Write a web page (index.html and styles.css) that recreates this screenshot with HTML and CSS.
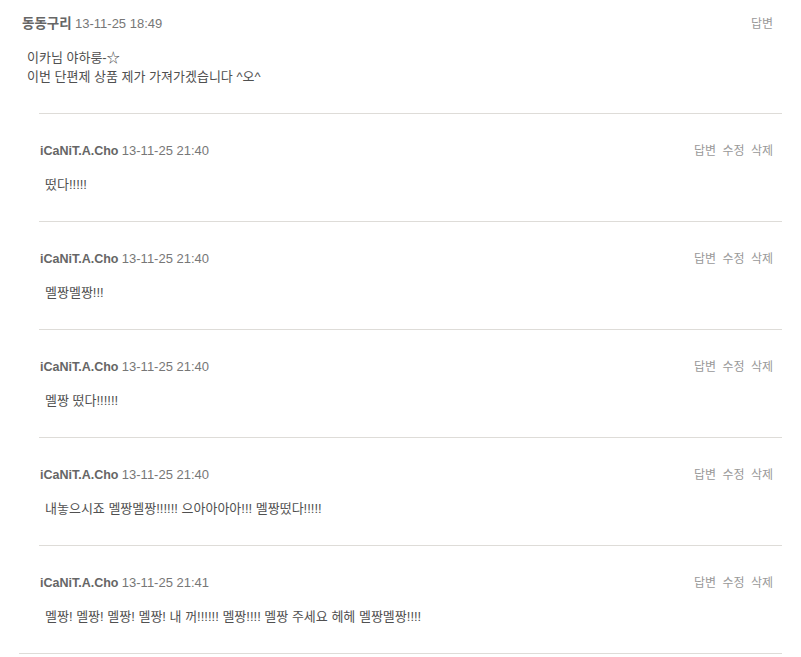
FILE: index.html
```html
<!DOCTYPE html>
<html lang="ko">
<head>
    <meta charset="UTF-8">
    <meta name="viewport" content="width=device-width, initial-scale=1.0">
    <title>댓글</title>
    <link rel="stylesheet" href="styles.css">
</head>
<body>
    <div class="thread">
        <div class="comment">
            <div class="comment-head">
                <div class="who"><span class="name">동동구리</span> <span class="date">13-11-25 18:49</span></div>
                <div class="actions"><a href="#">답변</a></div>
            </div>
            <div class="comment-body">
                이카님 야하룽-☆<br>
                이번 단편제 상품 제가 가져가겠습니다 ^오^
            </div>
        </div>

        <div class="replies">
            <div class="reply">
                <div class="comment-head">
                    <div class="who"><span class="name">iCaNiT.A.Cho</span> <span class="date">13-11-25 21:40</span></div>
                    <div class="actions"><a href="#">답변</a> <a href="#">수정</a> <a href="#">삭제</a></div>
                </div>
                <div class="comment-body">떴다!!!!!</div>
            </div>
            <div class="reply">
                <div class="comment-head">
                    <div class="who"><span class="name">iCaNiT.A.Cho</span> <span class="date">13-11-25 21:40</span></div>
                    <div class="actions"><a href="#">답변</a> <a href="#">수정</a> <a href="#">삭제</a></div>
                </div>
                <div class="comment-body">멜짱멜짱!!!</div>
            </div>
            <div class="reply">
                <div class="comment-head">
                    <div class="who"><span class="name">iCaNiT.A.Cho</span> <span class="date">13-11-25 21:40</span></div>
                    <div class="actions"><a href="#">답변</a> <a href="#">수정</a> <a href="#">삭제</a></div>
                </div>
                <div class="comment-body">멜짱 떴다!!!!!!</div>
            </div>
            <div class="reply">
                <div class="comment-head">
                    <div class="who"><span class="name">iCaNiT.A.Cho</span> <span class="date">13-11-25 21:40</span></div>
                    <div class="actions"><a href="#">답변</a> <a href="#">수정</a> <a href="#">삭제</a></div>
                </div>
                <div class="comment-body">내놓으시죠 멜짱멜짱!!!!!! 으아아아아!!! 멜짱떴다!!!!!</div>
            </div>
            <div class="reply">
                <div class="comment-head">
                    <div class="who"><span class="name">iCaNiT.A.Cho</span> <span class="date">13-11-25 21:41</span></div>
                    <div class="actions"><a href="#">답변</a> <a href="#">수정</a> <a href="#">삭제</a></div>
                </div>
                <div class="comment-body">멜짱! 멜짱! 멜짱! 멜짱! 내 꺼!!!!!! 멜짱!!!! 멜짱 주세요 헤헤 멜짱멜짱!!!!</div>
            </div>
        </div>
    </div>
</body>
</html>
```

FILE: styles.css
```css
body {
    margin: 0;
    background: #fff;
    font-family: "Liberation Sans", "Noto Sans CJK KR", sans-serif;
    font-size: 12px;
    color: #444;
}

.thread {
    margin: 0 19px;
    border-bottom: 1px solid #dedcd8;
}

.comment {
    padding: 15px 9px 27px 3px;
}

.comment-head {
    display: flex;
    justify-content: space-between;
    align-items: center;
    line-height: 18px;
}

.name {
    font-size: 12.5px;
    font-weight: bold;
    color: #666;
}

.comment .name {
    font-size: 13.5px;
}

.date {
    font-size: 13px;
    color: #777;
}

.actions {
    word-spacing: 3px;
}

.actions a {
    color: #999;
    text-decoration: none;
}

.comment-body {
    margin-top: 15px;
    padding-left: 5px;
    font-size: 13px;
    line-height: 19px;
    color: #505050;
}

.replies {
    margin-left: 20px;
}

.reply {
    border-top: 1px solid #dedcd8;
    padding: 28px 9px 27px 1px;
}
```
